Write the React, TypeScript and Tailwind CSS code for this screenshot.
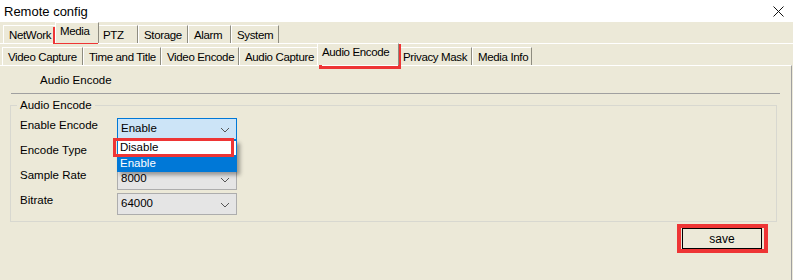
import React from "react";

const font = { fontFamily: '"Liberation Sans", Arial, sans-serif' };

const Chevron = () => (
  <svg width="10" height="6" viewBox="0 0 10 6" className="absolute right-[6px] top-[8px]">
    <path d="M1 1 L5 5 L9 1" fill="none" stroke="#555" strokeWidth="1" />
  </svg>
);

const Tab = ({ label, w, active = false, h = 18 }: { label: string; w: number; active?: boolean; h?: number }) => (
  <div
    className={`flex items-center shrink-0 whitespace-nowrap overflow-hidden border-t border-l border-white border-r border-r-[#8e8c80] text-[11.5px] tracking-[-0.35px] text-black ${
      active ? "relative z-10 bg-[#ece9d8] -mx-[2px] pb-[3px] pl-[4px]" : "pt-[2px] pl-[5px]"
    }`}
    style={{ width: w, height: active ? h + 3 : h }}
  >
    {label}
  </div>
);

const Select = ({ value, focus = false }: { value: string; focus?: boolean }) => (
  <div
    className={`relative w-[120px] h-[22px] border flex items-center pl-[3px] text-[11.5px] ${
      focus ? "bg-[#cce4f7] border-[#0078d7]" : "bg-[#e5e5e5] border-[#adadad]"
    }`}
  >
    {value}
    <Chevron />
  </div>
);

const Row = ({ label, children }: { label: string; children: React.ReactNode }) => (
  <div className="flex items-start h-[22px]">
    <span className="w-[97px] leading-[14px]">{label}</span>
    {children}
  </div>
);

export default function App() {
  return (
    <div className="relative w-[793px] h-[280px] overflow-hidden bg-[#ece9d8] text-black" style={font}>
      {/* title bar */}
      <div className="h-[22px] bg-white flex items-center justify-between pl-[4px] pr-[9px]">
        <span className="text-[13px] leading-none">Remote config</span>
        <svg width="11" height="11" viewBox="0 0 11 11">
          <path d="M0.5 0.5 L10.5 10.5 M10.5 0.5 L0.5 10.5" stroke="#111" strokeWidth="1" />
        </svg>
      </div>

      {/* first tab row */}
      <div className="h-[21px] flex items-end pl-[3px]">
        <Tab label="NetWork" w={54} />
        <Tab label="Media" w={44} active />
        <Tab label="PTZ" w={41} />
        <Tab label="Storage" w={50} />
        <Tab label="Alarm" w={43} />
        <Tab label="System" w={48} />
      </div>

      <div className="border-t border-white">
        {/* second tab row */}
        <div className="h-[21px] flex items-end pl-[2px]">
          <Tab label="Video Capture" w={81} />
          <Tab label="Time and Title" w={78} />
          <Tab label="Video Encode" w={78} />
          <Tab label="Audio Capture" w={80} />
          <Tab label="Audio Encode" w={82} active h={19} />
          <Tab label="Privacy Mask" w={75} />
          <Tab label="Media Info" w={60} />
        </div>

        <div className="h-[215px] border-t border-white border-r border-r-[#a0a0a0] mr-[1px] pl-[10px] pr-[10px] text-[11.5px]">
          <div className="h-[27px] flex items-center pl-[30px] pt-[2px]">Audio Encode</div>
          <div className="h-px bg-[#a0a0a0] mr-[1px] ml-[1px]" />

          <div className="relative mt-[11px] w-[767px] h-[117px] border border-[#d8d8d0]">
            <span className="absolute -top-[8px] left-[6px] px-[3px] bg-[#ece9d8] leading-[14px]">Audio Encode</span>
            <div className="flex flex-col gap-[3px] pt-[12px] pl-[9px]">
              <Row label="Enable Encode">
                <Select value="Enable" focus />
              </Row>
              <Row label="Encode Type">
                <Select value="" />
              </Row>
              <Row label="Sample Rate">
                <Select value="8000" />
              </Row>
              <Row label="Bitrate">
                <Select value="64000" />
              </Row>
            </div>
          </div>

          <div className="flex justify-end pr-[19px] mt-[6px]">
            <div className="w-[80px] h-[21px] border border-black flex items-center justify-center text-[12px]">save</div>
          </div>
        </div>
      </div>

      {/* open dropdown list */}
      <div className="absolute left-[117px] top-[140px] w-[120px] shadow-[3px_3px_4px_rgba(0,0,0,0.35)] text-[11.5px]">
        <div className="h-[16px] bg-white border border-[#0078d7] flex items-center pl-[2px]">Disable</div>
        <div className="h-[16px] bg-[#0078d7] text-white flex items-center pl-[3px]">Enable</div>
      </div>

      {/* red annotation boxes */}
      <div className="absolute left-[53px] top-[27px] w-[45px] h-[17px] border-[3px] border-[#ee3535]" />
      <div className="absolute left-[319px] top-[44px] w-[82px] h-[25px] border-[3px] border-[#ee3535]" />
      <div className="absolute left-[113px] top-[138px] w-[121px] h-[19px] border-[3px] border-[#ee3535]" />
      <div className="absolute left-[677px] top-[224px] w-[91px] h-[29px] border-[4px] border-[#ee3535]" />
    </div>
  );
}
